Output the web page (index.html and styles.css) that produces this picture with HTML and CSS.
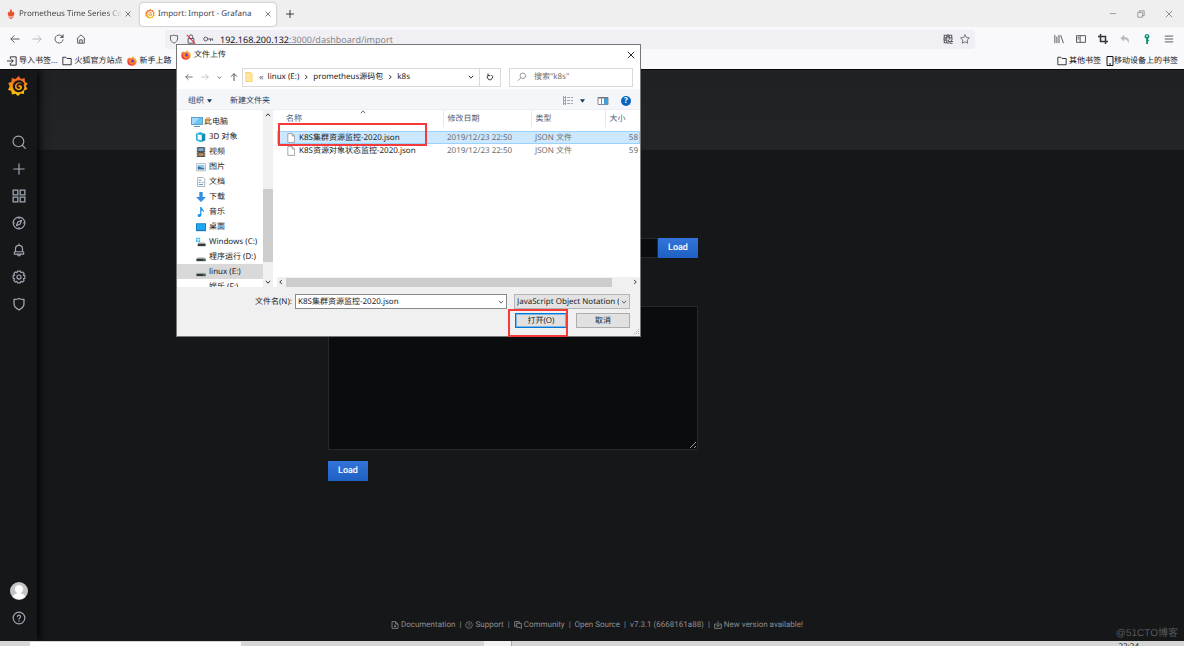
FILE: index.html
```html
<!DOCTYPE html>
<html lang="zh-CN">
<head>
<meta charset="utf-8">
<title>Import: Import - Grafana</title>
<link rel="stylesheet" href="styles.css">
</head>
<body>
<svg class="defs" aria-hidden="true">
  <defs>
    <linearGradient id="flame" x1="0" y1="0" x2="0" y2="1"><stop offset="0" stop-color="#f05a28"/><stop offset="1" stop-color="#fbca0a"/></linearGradient>
    <linearGradient id="fox" x1="1" y1="0" x2="0" y2="1"><stop offset="0" stop-color="#ffe03c"/><stop offset=".45" stop-color="#ff7a22"/><stop offset="1" stop-color="#e8144f"/></linearGradient>
    <symbol id="grafana" viewBox="0 0 24 24">
      <path fill="url(#flame)" d="M13 0l2.500 3.600L20 2.500l.3 4.500 3.400 2-2.200 3 1.800 4-3.800 1.300-.5 4.200-4-.6L12 24l-3-2.800-4.300 1-.7-4.200L0 16.500l2-4L.3 8.500l3.900-1.700L4.500 2.500l4.500 1z"/>
      <path fill="none" stroke="var(--hole)" stroke-width="2.600" stroke-linecap="round" d="M18.200 9C16.300 6.200 12.700 5.500 10 7.200 7 9 6.200 12.800 7.900 15.600c1.800 2.800 5.600 3.600 8.300 1.600 2-1.600 2.400-4.300 1-6.300"/>
      <path fill="none" stroke="var(--hole)" stroke-width="2" stroke-linecap="round" d="M17.200 10.800c-1.700-1.700-4.900-1.500-5.800.6-.6 1.500.4 3 2 2.900"/>
    </symbol>
    <symbol id="firefox" viewBox="0 0 24 24">
      <path fill="url(#fox)" d="M2.500 5l2.300 1.200L6.500 3l2.300 3C11 5 13 3.500 14 .5c2.500 1.500 3.700 3.500 4 5.500l1.500-.8C22 8 23.300 10.500 23.300 13A11.300 10.800 0 0 1 12 23.500 11.300 11 0 0 1 .7 13C.7 9.500 1.300 7.200 2.500 5z"/>
      <circle cx="12" cy="13" r="5.200" fill="#7040d8"/>
      <path fill="#ff8a28" d="M5 8c3-1 5.500 0 7 1.500l-2.500 1.800c-.5 2 .5 3.500 2.500 4.200 2 .5 4-.5 5-2 .5 4-3 6.500-6.500 6C6 19 4 14.500 5 8z"/>
    </symbol>
    <symbol id="chev-down" viewBox="0 0 10 10"><path fill="none" stroke="currentColor" stroke-width="1.500" d="M1.500 3l3.500 4 3.500-4"/></symbol>
    <symbol id="chev-right" viewBox="0 0 10 10"><path fill="none" stroke="currentColor" stroke-width="1.500" d="M3.500 1.500l3.500 3.500-3.500 3.500"/></symbol>
    <symbol id="left" viewBox="0 0 12 12"><path fill="none" stroke="currentColor" stroke-width="1.200" d="M11.500 6H1M5.300 1.700L1 6l4.300 4.300"/></symbol>
    <symbol id="right" viewBox="0 0 12 12"><path fill="none" stroke="currentColor" stroke-width="1.200" d="M.5 6H11M6.700 1.700L11 6l-4.300 4.300"/></symbol>
    <symbol id="close" viewBox="0 0 10 10"><path fill="none" stroke="currentColor" stroke-width="1.200" d="M1 1l8 8M9 1L1 9"/></symbol>
    <symbol id="folder" viewBox="0 0 12 12"><path fill="none" stroke="currentColor" stroke-linejoin="round" d="M1 9.500v-8h3.500L6 3h5v7.500H1z"/></symbol>
    <symbol id="shield" viewBox="0 0 24 24"><path fill="none" stroke="currentColor" stroke-width="2.200" stroke-linejoin="round" d="M12 2.500c3 1.500 5.500 2 8.500 1.500v8c0 4.500-3.500 7.500-8.500 10-5-2.500-8.500-5.500-8.500-10V4c3 .5 5.500 0 8.500-1.500z"/></symbol>
    <symbol id="help" viewBox="0 0 24 24"><g fill="none" stroke="currentColor" stroke-width="2"><circle cx="12" cy="12" r="10"/><path stroke-linecap="round" d="M9.300 9.500c.2-3.500 5.700-3 5.400.3-.2 2-2.700 2-2.700 4.200M12 17v.4"/></g></symbol>
    <symbol id="file" viewBox="0 0 10 12"><path fill="#fff" stroke="#929292" d="M1 .5h5.500l3 3v8H1zM6.500.5v3h3"/></symbol>
    <symbol id="drive" viewBox="0 0 12 12"><path fill="#cfd2d5" d="M2 6h8l1.500 2.500H.5z"/><path fill="#33383b" d="M.5 8h11v3H.5z"/><path fill="#48d35b" d="M8.500 9h2v1h-2z"/></symbol>
  </defs>
</svg>
<div class="screen">
  <header class="browser">
    <div class="tabs">
      <div class="tab">
        <svg class="i10" viewBox="0 0 24 24"><path fill="#e6522c" d="M12 0c3 4 1 5 4 8 2-1 1.500-2.500 1.500-2.500C21 10 20.500 14 17.500 17h-11C3 13 4 9 6 6c0 2 1 3 2 3 1-4 1-6 4-9zM6 18h12v2.500H6zM8.500 21.500h7c-1 3-6 3-7 0z"/></svg>
        <span class="tab-title fade">Prometheus Time Series Collection</span>
        <button aria-label="关闭标签页"><svg class="i6"><use href="#close"/></svg></button>
      </div>
      <div class="tab active">
        <svg class="i10 logo-light"><use href="#grafana"/></svg>
        <span class="tab-title">Import: Import - Grafana</span>
        <button aria-label="关闭标签页"><svg class="i6"><use href="#close"/></svg></button>
      </div>
      <button class="new-tab" aria-label="新标签页"><svg class="i8" viewBox="0 0 10 10"><path stroke="currentColor" d="M5 0v10M0 5h10"/></svg></button>
      <div class="window-buttons">
        <button aria-label="最小化"><svg class="i8" viewBox="0 0 10 10"><path stroke="currentColor" d="M1 4.500h8"/></svg></button>
        <button aria-label="还原"><svg class="i8" viewBox="0 0 10 10"><path fill="none" stroke="currentColor" d="M1 3h6v6H1zM3 3V1h6v6H7"/></svg></button>
        <button aria-label="关闭"><svg class="i8"><use href="#close"/></svg></button>
      </div>
    </div>
    <div class="toolbar">
      <div class="nav-buttons">
        <button aria-label="后退"><svg class="i10"><use href="#left"/></svg></button>
        <button class="off" aria-label="前进"><svg class="i10"><use href="#right"/></svg></button>
        <button aria-label="刷新"><svg class="i10" viewBox="0 0 12 12"><path fill="none" stroke="currentColor" stroke-width="1.200" d="M10.800 6.500A4.800 4.800 0 1 1 9.500 2.700l1 1"/><path fill="currentColor" d="M11.500 0v4.700H7z"/></svg></button>
        <button aria-label="主页"><svg class="i10" viewBox="0 0 12 12"><path fill="none" stroke="currentColor" stroke-width="1.200" stroke-linejoin="round" d="M1 5.800L6 1l5 4.800M2 5v6h8V5M4.500 11V7h3v4"/></svg></button>
      </div>
      <div class="urlbar">
        <svg class="i10"><use href="#shield"/></svg>
        <svg class="i10" viewBox="0 0 12 12"><path fill="none" stroke="#5b5b66" stroke-width="1.200" d="M2.500 5.500h7V11h-7zM4 5.500V3a2 2 0 0 1 4 0v2.500"/><path stroke="#e22850" stroke-width="1.300" d="M1 1l10 10.500"/></svg>
        <svg class="i10" viewBox="0 0 12 12"><path fill="none" stroke="currentColor" stroke-width="1.200" d="M5.500 6H12M9 6v2.500M11.400 6v2"/><circle cx="3.200" cy="6" r="2.300" fill="none" stroke="currentColor" stroke-width="1.200"/></svg>
        <span class="url"><b>192.168.200.132</b>:3000/dashboard/import</span>
        <button aria-label="二维码"><svg class="i10" viewBox="0 0 12 12"><path fill="none" stroke="currentColor" stroke-width="1.300" d="M1.500 1.500h3v3h-3zM7.500 1.500h3v3h-3zM1.500 7.500h3v3h-3zM6 0v5M0 6h5M7 6h2M10 6h2M6.500 7v2h2v2h3M10 7v2h2M6 10v2"/></svg></button>
        <button aria-label="添加书签"><svg class="i10" viewBox="0 0 12 12"><path fill="none" stroke="currentColor" stroke-linejoin="round" d="M6 .8l1.600 3.400 3.700.5-2.700 2.600.7 3.800L6 9.300l-3.300 1.800.7-3.800L.7 4.700l3.700-.5z"/></svg></button>
      </div>
      <div class="tools">
        <button aria-label="我的足迹"><svg class="i10" viewBox="0 0 12 12"><path stroke="currentColor" stroke-width="1.200" d="M1 1v10M3.500 3v8M6 1v10M8 1.500l3.300 9.500"/></svg></button>
        <button aria-label="侧栏"><svg class="i10" viewBox="0 0 12 12"><path fill="none" stroke="currentColor" stroke-width="1.200" d="M.6 2h10.800v8H.6zM5 2v8M2 4h2M2 6h2"/></svg></button>
        <button class="dark" aria-label="截图"><svg class="i10" viewBox="0 0 12 12"><path fill="none" stroke="currentColor" stroke-width="1.800" d="M3 0v9h9M0 3h9v9"/></svg></button>
        <button class="off" aria-label="撤销"><svg class="i10" viewBox="0 0 12 12"><path fill="currentColor" d="M5 1L.5 5 5 9V6.300c2.500-.2 4.500 1 4.800 4.700C12.500 6 9 3.500 5 3.500z"/></svg></button>
        <button class="key" aria-label="密码"><svg class="i10" viewBox="0 0 12 12"><path fill="currentColor" fill-rule="evenodd" d="M6 0a3 3 0 0 1 1.200 5.700V7H8.500v1.300H7.200V12H5V5.800A3 3 0 0 1 6 0zM6 1.500a1 1 0 1 0 .01 0z"/></svg></button>
        <button aria-label="菜单"><svg class="i10" viewBox="0 0 12 12"><path stroke="currentColor" stroke-width="1.200" d="M1 2.500h10M1 6h10M1 9.500h10"/></svg></button>
      </div>
    </div>
    <nav class="bookmarks">
      <a href="#"><svg class="i10" viewBox="0 0 12 12"><path fill="none" stroke="currentColor" d="M4 3.500V1h7v10H4V8.500M0 6h7.500M5 3.500L7.500 6 5 8.500"/></svg>导入书签...</a>
      <a href="#"><svg class="i10"><use href="#folder"/></svg>火狐官方站点</a>
      <a href="#"><svg class="i10"><use href="#firefox"/></svg>新手上路</a>
      <span class="spacer"></span>
      <a href="#"><svg class="i10"><use href="#folder"/></svg>其他书签</a>
      <a href="#" class="mobile"><svg class="phone" viewBox="0 0 8 10"><path fill="none" stroke="currentColor" d="M1 .5h6v9H1zM3 8h2"/></svg>移动设备上的书签</a>
    </nav>
  </header>

  <div class="app">
    <aside class="sidemenu">
      <a href="#" class="brand" aria-label="Grafana"><svg class="i20"><use href="#grafana"/></svg></a>
      <nav class="side-links">
        <a href="#" aria-label="Search"><svg class="i14" viewBox="0 0 24 24"><g fill="none" stroke="currentColor" stroke-width="2" stroke-linecap="round"><circle cx="11" cy="11" r="9.200"/><path d="M18 18l5 5"/></g></svg></a>
        <a href="#" aria-label="Create"><svg class="i14" viewBox="0 0 24 24"><path stroke="currentColor" stroke-width="2" stroke-linecap="round" d="M12 3v18M3 12h18"/></svg></a>
        <a href="#" aria-label="Dashboards"><svg class="i14" viewBox="0 0 24 24"><path fill="none" stroke="currentColor" stroke-width="2.200" d="M2 2h8v8H2zM14 2h8v8h-8zM2 14h8v8H2zM14 14h8v8h-8z"/></svg></a>
        <a href="#" aria-label="Explore"><svg class="i14" viewBox="0 0 24 24"><g fill="none" stroke="currentColor" stroke-width="2"><circle cx="12" cy="12" r="10"/><path stroke-linejoin="round" d="M16.500 7.500l-2.500 6.300-6.500 2.700 2.500-6.300zM12 2v3M12 19v3M2 12h3M19 12h3"/></g></svg></a>
        <a href="#" aria-label="Alerting"><svg class="i14" viewBox="0 0 24 24"><path fill="none" stroke="currentColor" stroke-width="2" stroke-linejoin="round" d="M12 1v3M6 14v-4a6 6 0 0 1 12 0v4l2 2v3H4v-3zM6 15h12M9.500 20c.5 3 4.500 3 5 0"/></svg></a>
        <a href="#" aria-label="Configuration"><svg class="i14" viewBox="0 0 24 24"><g fill="none" stroke="currentColor" stroke-width="2" stroke-linejoin="round"><path d="M9.500 2h5l.8 2.600L18 3.400 20.800 6l-1.200 2.800L22 9.700v4.600l-2.500.9 1.200 2.800-2.700 2.700-2.700-1.200-.9 2.500H9.500l-.9-2.500L6 20.700 3.200 18l1.200-2.800L2 14.300V9.700l2.500-.9L3.200 6 6 3.300l2.700 1.200z"/><circle cx="12" cy="12" r="3.500"/></g></svg></a>
        <a href="#" aria-label="Server Admin"><svg class="i14"><use href="#shield"/></svg></a>
      </nav>
      <div class="side-bottom">
        <a href="#" aria-label="Profile"><svg class="i18" viewBox="0 0 24 24"><circle cx="12" cy="12" r="12" fill="#c5c5c5"/><circle cx="12" cy="9.500" r="5.500" fill="#fff"/><path fill="#fff" d="M9 13h6v2.500c3 .5 5 1.500 5.500 4a12 12 0 0 1-17 0c.5-2.500 2.500-3.500 5.500-4z"/></svg></a>
        <a href="#" aria-label="Help"><svg class="i14"><use href="#help"/></svg></a>
      </div>
    </aside>
    <main class="main">
      <div class="page-header"></div>
      <div class="form">
        <div class="url-row"><input type="text" aria-label="Grafana.com dashboard URL or ID"><button class="load">Load</button></div>
        <textarea aria-label="Dashboard JSON"></textarea>
        <button class="load">Load</button>
      </div>
      <footer class="footer">
        <a href="#"><svg class="i8" viewBox="0 0 24 24"><path fill="none" stroke="currentColor" stroke-width="2.500" d="M3 2h11l7 7v13H3zM14 2v7h7M12 11v7M9 15l3 3 3-3"/></svg>Documentation</a><i>|</i>
        <a href="#"><svg class="i8"><use href="#help"/></svg>Support</a><i>|</i>
        <a href="#"><svg class="i8" viewBox="0 0 24 24"><path fill="none" stroke="currentColor" stroke-width="2.500" d="M7 14l-5 3V2h14v4M8 7h14v16l-4-4H8z"/></svg>Community</a><i>|</i>
        <a href="#">Open Source</a><i>|</i>
        <span>v7.3.1 (6668161a88)</span><i>|</i>
        <a href="#"><svg class="i8" viewBox="0 0 24 24"><path fill="none" stroke="currentColor" stroke-width="2.500" d="M8 9H2v13h20V9h-6M12 1v15M7 12l5 5 5-5"/></svg>New version available!</a>
      </footer>
      <span class="watermark">@51CTO博客</span>
    </main>
  </div>
  <div class="taskbar"><span class="task-open"></span><span class="task-mid"></span><span class="clock">22:24</span></div>

  <section class="dialog" role="dialog" aria-label="文件上传">
    <div class="titlebar"><svg class="i10"><use href="#firefox"/></svg><span>文件上传</span><button aria-label="关闭"><svg class="i8"><use href="#close"/></svg></button></div>
    <div class="pathbar">
      <div class="path-nav">
        <button aria-label="后退"><svg class="i8"><use href="#left"/></svg></button>
        <button class="off" aria-label="前进"><svg class="i8"><use href="#right"/></svg></button>
        <button aria-label="最近"><svg class="i4"><use href="#chev-down"/></svg></button>
        <button aria-label="上移"><svg class="i8" viewBox="0 0 12 12"><path fill="none" stroke="currentColor" stroke-width="1.500" d="M6 12V1M1.500 5.500L6 1l4.500 4.500"/></svg></button>
      </div>
      <div class="address">
        <svg class="i10" viewBox="0 0 12 14"><path fill="#f5cd62" d="M1 0h8v2h2v12H1z"/><path fill="#ffe59b" d="M2 1h8v12H2z"/></svg>
        <span class="guil">«</span><button>linux (E:)</button><svg class="i6"><use href="#chev-right"/></svg><button>prometheus源码包</button><svg class="i6"><use href="#chev-right"/></svg><button>k8s</button>
        <button class="drop" aria-label="展开"><svg class="i6"><use href="#chev-down"/></svg></button>
        <button class="refresh" aria-label="刷新"><svg class="i8" viewBox="0 0 12 12"><path fill="none" stroke="currentColor" stroke-width="1.300" d="M8 2.800A4 4 0 1 1 3.500 3M3 .5V4h3.500"/></svg></button>
      </div>
      <label class="search"><svg class="i10" viewBox="0 0 12 12"><g fill="none" stroke="#888"><circle cx="7" cy="4.500" r="3.300"/><path d="M4.500 7L1 10.500"/></g></svg><input type="text" placeholder='搜索"k8s"' aria-label="搜索"></label>
    </div>
    <div class="commands">
      <button>组织<svg class="tri" viewBox="0 0 6 4"><path fill="#1e395b" d="M0 0h6L3 4z"/></svg></button>
      <button>新建文件夹</button>
      <span class="spacer"></span>
      <button class="view" aria-label="视图"><svg class="i12" viewBox="0 0 12 12"><path fill="none" stroke="#a0a4a8" d="M1 2.500h3M1 5.500h3M1 8.500h3M5 2.500h3M9 2.500h2M5 5.500h3M9 5.500h2M5 8.500h3M9 8.500h2M1.500 1v9M3.500 1v9"/></svg><svg class="tri" viewBox="0 0 6 4"><path fill="#1e395b" d="M0 0h6L3 4z"/></svg></button>
      <button aria-label="预览窗格"><svg class="i12" viewBox="0 0 12 12"><path fill="#fff" stroke="#888" d="M1 2.500h10v7H1zM4.500 3v6"/><path fill="#3f9edb" d="M7 3h4v6.500H7z"/><path fill="#777" d="M1 2h10v1.500H1z"/></svg></button>
      <button class="round" aria-label="帮助">?</button>
    </div>
    <div class="panes">
      <ul class="tree">
        <li class="root"><svg class="i12" viewBox="0 0 12 12"><path fill="#5aa0cf" d="M0 1h12v8H0z"/><path fill="#6cc4f2" d="M1 2h10v6H1z"/><path fill="#a5dafa" d="M1 2h7L3 8H1z"/><path fill="#6590b0" d="M3 10h6v1H3z"/></svg>此电脑</li>
        <li><svg class="i10" viewBox="0 0 12 12"><path fill="#28b4dc" d="M0 2l5-2 6 2v8l-6 2-5-2z"/><path fill="#fff" d="M2 3l5 1v6l-5-1z"/><path fill="#1689b4" d="M7 4l4-2v8l-4 2z"/></svg>3D 对象</li>
        <li><svg class="i10" viewBox="0 0 12 12"><path fill="#414449" d="M1 0h10v12H1z"/><path fill="#7da7d5" d="M3 1h6v4H3z"/><path fill="#b5864d" d="M3 7h6v4H3z"/><path stroke="#ddd" stroke-dasharray="1 1" d="M2 0v12M10 0v12"/></svg>视频</li>
        <li><svg class="i10" viewBox="0 0 12 12"><path fill="#fff" stroke="#a7adb3" d="M.5 2h11v8.500H.5z"/><path fill="#90c9ee" d="M2 3.500h8V7H2z"/><path fill="#3773a5" d="M2 6c2-2 4 2 8 1v2H2z"/></svg>图片</li>
        <li><svg class="i10" viewBox="0 0 12 12"><path fill="#fff" stroke="#9aa1a7" d="M2 .5h6.500l2 2v9H2z"/><path stroke="#488bbd" d="M3.500 4h3M3.500 6.500h2M7 6.500h2M3.500 9h5"/></svg>文档</li>
        <li><svg class="i10" viewBox="0 0 12 12"><path fill="#3290df" d="M4 0h4v6h4l-6 6-6-6h4z"/></svg>下载</li>
        <li><svg class="i10" viewBox="0 0 12 12"><path fill="#1697e8" d="M5 0h1.500c.2 3 4 3 3 6.500C9 5 8 4.500 6.500 4.500V10c-.3 2.500-5 2.500-4.500 0 .2-1.500 2-2 3-1.500z"/></svg>音乐</li>
        <li><svg class="i10" viewBox="0 0 12 12"><path fill="#1477bd" d="M0 1.500h12v9.500H0z"/><path fill="#20a7f2" d="M1 2.500h10v7H1z"/></svg>桌面</li>
        <li><svg class="i10" viewBox="0 0 12 12"><path fill="#1db7e9" d="M0 1h2v2H0zM3 1h2v2H3zM0 4h2v2H0zM3 4h2v2H3z"/><path fill="#cfd2d5" d="M3 6h7l1.500 2.500H2z"/><path fill="#33383b" d="M2 8h9.500v3H2z"/></svg>Windows (C:)</li>
        <li><svg class="i10"><use href="#drive"/></svg>程序运行 (D:)</li>
        <li class="selected"><svg class="i10"><use href="#drive"/></svg>linux (E:)</li>
        <li><svg class="i10"><use href="#drive"/></svg>娱乐 (F:)</li>
      </ul>
      <div class="vscroll"><svg class="i6 flip"><use href="#chev-down"/></svg><span class="vthumb"></span><svg class="i6"><use href="#chev-down"/></svg></div>
      <div class="files">
        <table>
          <thead><tr><th class="c-name">名称<svg class="i6 flip sort"><use href="#chev-down"/></svg></th><th class="c-date">修改日期</th><th class="c-type">类型</th><th class="c-size">大小</th></tr></thead>
          <tbody>
            <tr class="gap"><td colspan="4"></td></tr>
            <tr class="selected"><td><svg class="doc"><use href="#file"/></svg>K8S集群资源监控-2020.json</td><td>2019/12/23 22:50</td><td>JSON 文件</td><td>58</td></tr>
            <tr><td><svg class="doc"><use href="#file"/></svg>K8S资源对象状态监控-2020.json</td><td>2019/12/23 22:50</td><td>JSON 文件</td><td>59</td></tr>
          </tbody>
        </table>
        <div class="hscroll"><svg class="i6 flip"><use href="#chev-right"/></svg><span class="hthumb"></span><svg class="i6"><use href="#chev-right"/></svg></div>
        <span class="mark mark-file"></span>
      </div>
    </div>
    <div class="dialog-foot">
      <label for="fname">文件名(N):</label>
      <div class="combo"><input id="fname" type="text" value="K8S集群资源监控-2020.json"><svg class="i6"><use href="#chev-down"/></svg></div>
      <div class="combo grey"><select aria-label="文件类型"><option>JavaScript Object Notation (</option></select><svg class="i6"><use href="#chev-down"/></svg></div>
      <div class="actions"><div class="open-wrap"><button class="primary">打开(O)</button><span class="mark mark-open"></span></div><button>取消</button></div>
      <svg class="grip" viewBox="0 0 6 6"><path stroke="#aaa" stroke-dasharray="1 1" d="M5.500 0v6M3.500 2v4M1.500 4v2"/></svg>
    </div>
  </section>
</div>
</body>
</html>
```
FILE: styles.css
```css
* { box-sizing: border-box; }
body { margin: 0; font: 8px/12px "Noto Sans", "Noto Sans CJK SC", sans-serif; color: #15141a; text-rendering: geometricPrecision; --hole: #17181b; }
button, input, select, textarea { font: inherit; color: inherit; margin: 0; padding: 0; border: 0; background: none; border-radius: 0; outline: 0; appearance: none; text-rendering: inherit; }
button { display: inline-flex; align-items: center; justify-content: center; white-space: nowrap; }
a { color: inherit; text-decoration: none; display: inline-flex; align-items: center; }
svg { display: block; flex: none; }
.defs { position: absolute; width: 0; height: 0; }
.i4 { width: 5px; height: 5px; }
.i6 { width: 6px; height: 6px; }
.i8 { width: 8px; height: 8px; }
.i10 { width: 10px; height: 10px; }
.i12 { width: 12px; height: 12px; }
.i14 { width: 14px; height: 14px; }
.i18 { width: 18px; height: 18px; }
.i20 { width: 20px; height: 20px; }
.flip { transform: rotate(180deg); }
.spacer { flex: 1; }
.off { color: #b8b8bd; }
.logo-light { --hole: #fff; }
.screen { position: relative; display: flex; flex-direction: column; height: 100vh; overflow: hidden; }

.browser { background: #f9f9fb; }
.tabs { display: flex; align-items: center; height: 27px; padding-top: 1px; background: #efefef; }
.tab { display: flex; align-items: center; gap: 3px; width: 136px; height: 23px; padding: 0 5px 0 6px; color: #45454c; }
.tab.active { background: #fff; border-radius: 3px; box-shadow: 0 0 2px #888; margin-left: 4px; padding-left: 5px; }
.tab-title { flex: 1; overflow: hidden; white-space: nowrap; }
.fade { -webkit-mask-image: linear-gradient(90deg, #000 85%, transparent); mask-image: linear-gradient(90deg, #000 85%, transparent); }
.new-tab { width: 28px; }
.window-buttons { display: flex; gap: 20px; margin-left: auto; padding-right: 11px; color: #888; }
.toolbar { display: flex; align-items: center; height: 24px; color: #5b5b66; }
.nav-buttons { display: flex; gap: 12px; padding-left: 10px; width: 165px; }
.urlbar { flex: 1; display: flex; align-items: center; gap: 7px; height: 19px; padding: 0 5px 0 4px; background: #f0f0f4; border-radius: 3px; }
.url { flex: 1; font-size: 9px; line-height: 11px; color: #84848c; }
.url b { font-weight: 400; color: #15141a; }
.tools { display: flex; gap: 12px; width: 209px; justify-content: flex-end; padding-right: 10px; }
.dark { color: #33333d; }
.key { color: #079276; }
.bookmarks { display: flex; align-items: center; gap: 5px; height: 18px; padding: 1px 6px 0 7px; }
.bookmarks a { gap: 2px; }
.bookmarks .mobile { gap: 0; }
.phone { width: 8px; height: 10px; }

.app { flex: 1; display: flex; min-height: 0; overflow: hidden; background: #161719; border-top: 1px solid #08080a; color: #c7d0d9; }
.sidemenu { display: flex; flex-direction: column; align-items: center; width: 37px; padding: 6px 0 16px; background: #161719; box-shadow: 2px 0 8px #000; z-index: 1; color: #9fa7b3; }
.brand { margin-right: 2px; }
.side-links { display: flex; flex-direction: column; gap: 13px; margin-top: 39px; }
.side-bottom { display: flex; flex-direction: column; align-items: center; gap: 11px; margin-top: auto; }
.main { position: relative; flex: 1; display: flex; flex-direction: column; font-family: Roboto, "Noto Sans CJK SC", sans-serif; }
.page-header { height: 80px; background: linear-gradient(#1f2124, #222428); }
.form { width: 370px; margin: 88px 0 0 291px; display: flex; flex-direction: column; align-items: flex-start; }
.url-row { display: flex; width: 100%; }
.url-row input { flex: 1; background: #0b0c0e; border: 1px solid #26282c; }
.load { width: 40px; height: 20px; font-size: 9px; font-weight: 500; color: #fff; background: linear-gradient(#3274d9, #1f60c4); }
.form textarea { width: 100%; height: 144px; margin: 48px 0 11px; background: #0b0c0e; border: 1px solid #26282c; }
.footer { display: flex; justify-content: center; gap: 4px; margin-top: auto; padding-bottom: 10px; padding-right: 27px; color: #8e8e8e; }
.footer a { gap: 2px; }
.footer i { font-style: normal; }
.watermark { position: absolute; right: 6px; bottom: 0; font: 10px/14px "Liberation Sans", "Noto Sans CJK SC", sans-serif; color: #55575a; }
.taskbar { display: flex; height: 5px; background: #d6d6d4; overflow: hidden; }
.task-open { width: 211px; margin: 1px 0 0 30px; background: #fff; }
.task-mid { width: 28px; margin-left: 243px; background: #f2f2f2; border-right: 1px solid #aaa; }
.clock { margin: 1px 45px 0 auto; font-size: 8px; line-height: 10px; }

.dialog { position: absolute; left: 177px; top: 45px; width: 463px; background: #fff; color: #222; box-shadow: 0 0 0 1px #777; }
.titlebar { display: flex; align-items: center; gap: 3px; height: 20px; padding: 0 5px 0 4px; }
.titlebar button { margin-left: auto; }
.pathbar { display: flex; align-items: center; height: 24px; padding: 0 7px; }
.path-nav { display: flex; align-items: center; gap: 8px; width: 58px; padding-left: 1px; color: #555; }
.address, .search { display: flex; align-items: center; height: 19px; border: 1px solid #d9d9d9; }
.address { width: 259px; padding-left: 1px; gap: 4px; }
.guil { margin-left: 1px; font-size: 9px; color: #666; }
.drop { margin-left: auto; width: 8px; }
.refresh { width: 21px; height: 100%; border-left: 1px solid #d9d9d9; }
.search { flex: 1; margin-left: 8px; padding: 0 7px; gap: 7px; min-width: 0; }
.search input { flex: 1; min-width: 0; color: #6d6d6d; }
.search input::placeholder { color: #6d6d6d; opacity: 1; }
.commands { display: flex; align-items: center; gap: 12px; height: 21px; padding: 3px 9px 0 11px; background: #f4f6f9; color: #1e395b; border-bottom: 1px solid #eceff3; }
.commands button { gap: 3px; }
.commands button:nth-child(2) { margin-left: 6px; }
.commands .view { gap: 6px; }
.tri { width: 5px; height: 4px; }
.round { width: 10px; height: 10px; border-radius: 50%; background: #0864bd; color: #fff; font-weight: 700; }
.panes { display: flex; height: 177px; }
.tree { width: 86px; height: 100%; margin: 0; padding: 4px 0 0; list-style: none; overflow: hidden; }
.tree li { display: flex; align-items: center; gap: 3px; height: 15px; padding-left: 19px; white-space: nowrap; }
.tree .root { padding-left: 14px; gap: 1px; }
.tree .selected { background: #d9d9d9; }
.vscroll { display: flex; flex-direction: column; align-items: center; width: 10px; padding: 2px 0; background: #f0f0f0; }
.vthumb { width: 100%; height: 73px; margin: auto 0 17px; background: #cdcdcd; }
.files { position: relative; flex: 1; display: flex; flex-direction: column; min-width: 0; padding-left: 4px; }
table { width: 100%; border-collapse: collapse; table-layout: fixed; }
th { height: 17px; padding: 0 0 0 4px; font-weight: 400; text-align: left; color: #4c607a; border-right: 1px solid #e8e8e8; }
th:last-child { border: 0; }
.c-name { position: relative; width: 166px; padding-left: 9px; }
.sort { position: absolute; left: 83px; top: -1px; }
.c-date { width: 88px; }
.c-type { width: 74px; }
td { height: 13px; padding: 0 0 0 4px; line-height: 13px; color: #6d6d6d; white-space: nowrap; }
td:first-child { display: flex; align-items: center; gap: 4px; padding-left: 10px; color: #222; }
td:last-child { text-align: right; padding-right: 2px; }
.gap td:first-child { display: table-cell; height: 4px; line-height: 4px; padding: 0; }
.files .selected { background: #cce8ff; outline: 1px solid #99d1ff; outline-offset: -1px; }
.doc { width: 8px; height: 10px; }
.hscroll { display: flex; align-items: center; justify-content: space-between; height: 10px; margin-top: auto; background: #f0f0f0; padding: 0 2px 0 1px; }
.hthumb { flex: 1; height: 9px; margin: 0 20px 0 2px; background: #cdcdcd; }
.mark { position: absolute; border: 2px solid #f53a3a; pointer-events: none; }
.mark-file { left: 5px; top: 13px; width: 149px; height: 23px; }
.dialog-foot { position: relative; display: grid; grid-template-columns: 115px 212px 116px; column-gap: 3px; row-gap: 4px; padding: 7px 0 8px; background: #f0f0f0; align-items: center; }
.dialog-foot label { text-align: right; }
.combo { position: relative; height: 15px; border: 1px solid #8a8a8a; background: #fff; }
.combo input, .combo select { display: block; width: 100%; height: 13px; padding: 0 10px 0 2px; }
.combo svg { position: absolute; right: 2px; top: 4px; color: #555; }
.grey { margin-left: 4px; margin-right: -4px; background: #e3e3e3; border-color: #b5b5b5; }
.actions { grid-column: 2 / 4; display: flex; justify-content: flex-end; gap: 9px; margin-right: -4px; }
.actions button { width: 54px; height: 15px; background: #e1e1e1; border: 1px solid #adadad; }
.open-wrap { position: relative; }
.actions .primary { display: flex; width: 52px; border: 1px solid #0078d7; box-shadow: inset 0 0 0 1px #7bb6e6; }
.mark-open { left: -7px; top: -4px; width: 60px; height: 28px; }
.grip { position: absolute; right: 1px; bottom: 1px; width: 6px; height: 6px; }
```
